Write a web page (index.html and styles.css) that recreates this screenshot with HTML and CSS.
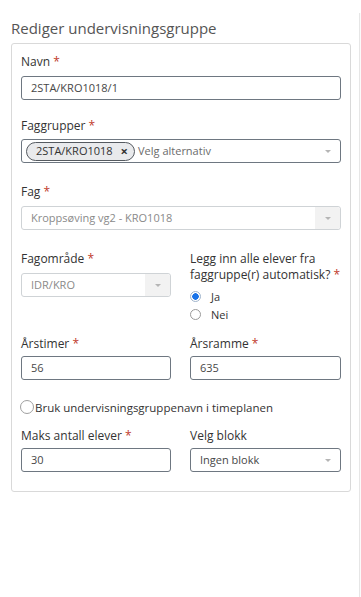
FILE: index.html
```html
<!DOCTYPE html>
<html lang="no">
<head>
  <meta charset="UTF-8">
  <meta name="viewport" content="width=device-width, initial-scale=1.0">
  <title>Rediger undervisningsgruppe</title>
  <link rel="stylesheet" href="styles.css">
</head>
<body>
  <div class="page">
    <main class="main">
      <h1 class="title">Rediger undervisningsgruppe</h1>

      <form class="card">
        <div class="field f-navn">
          <label class="label">Navn <span class="req">*</span></label>
          <div class="input">2STA/KRO1018/1</div>
        </div>

        <div class="field f-grupper">
          <label class="label">Faggrupper <span class="req">*</span></label>
          <div class="input select">
            <span class="chip">2STA/KRO1018 <span class="chip-x">&times;</span></span>
            <span class="placeholder">Velg alternativ</span>
            <span class="caret"></span>
          </div>
        </div>

        <div class="field f-fag">
          <label class="label">Fag <span class="req">*</span></label>
          <div class="input select disabled">
            <span class="value">Kroppsøving vg2 - KRO1018</span>
            <span class="caret-box"><span class="caret"></span></span>
          </div>
        </div>

        <div class="row row-omrade">
          <div class="field">
            <label class="label">Fagområde <span class="req">*</span></label>
            <div class="input select disabled">
              <span class="value">IDR/KRO</span>
              <span class="caret-box"><span class="caret"></span></span>
            </div>
          </div>
          <div class="field">
            <label class="label">Legg inn alle elever fra faggruppe(r) automatisk? <span class="req">*</span></label>
            <div class="radios">
              <div class="radio checked"><span class="dot"></span>Ja</div>
              <div class="radio"><span class="dot"></span>Nei</div>
            </div>
          </div>
        </div>

        <div class="row row-tight">
          <div class="field">
            <label class="label">Årstimer <span class="req">*</span></label>
            <div class="input">56</div>
          </div>
          <div class="field">
            <label class="label">Årsramme <span class="req">*</span></label>
            <div class="input">635</div>
          </div>
        </div>

        <div class="check">
          <span class="box"></span>Bruk undervisningsgruppenavn i timeplanen
        </div>

        <div class="row row-tight">
          <div class="field">
            <label class="label">Maks antall elever <span class="req">*</span></label>
            <div class="input">30</div>
          </div>
          <div class="field">
            <label class="label">Velg blokk</label>
            <div class="input select">
              <span class="value">Ingen blokk</span>
              <span class="caret"></span>
            </div>
          </div>
        </div>
      </form>
    </main>
    <aside class="side"></aside>
  </div>
</body>
</html>
```

FILE: styles.css
```css
:root {
  --text: #333333;
  --muted: #8a8a8a;
  --border: #6e7781;
  --border-light: #cfd3d6;
  --card-border: #d9d9d9;
  --req: #c0392b;
  --blue: #1a73e8;
}

* {
  margin: 0;
  padding: 0;
  box-sizing: border-box;
}

body {
  font-family: 'Open Sans', 'Liberation Sans', sans-serif;
  color: var(--text);
  background: #ffffff;
}

.page {
  display: flex;
  min-height: 597px;
}

.main {
  width: 359px;
  padding: 17px 8px 0 11px;
}

.side {
  flex: 1;
  margin-top: 13px;
  border-left: 1px solid #e6e6e6;
  background: #fafafa;
}

.title {
  font-size: 15px;
  font-weight: 400;
  color: #555555;
  line-height: 22px;
  margin-bottom: 4px;
}

.card {
  border: 1px solid var(--card-border);
  border-radius: 3px;
  padding: 10px 9px 19px 9px;
}

.label {
  display: block;
  font-size: 12px;
  font-weight: 500;
  line-height: 16px;
  margin-bottom: 6px;
}

.req {
  color: var(--req);
}

/* spacing between the stacked fields */
.f-navn {
  margin-bottom: 18px;
}

.f-grupper {
  margin-bottom: 21px;
}

.f-grupper .label {
  margin-bottom: 5px;
}

.f-fag {
  margin-bottom: 21px;
}

.input {
  height: 24px;
  border: 1px solid var(--border);
  border-radius: 3px;
  padding: 0 9px;
  font-size: 11px;
  line-height: 22px;
  color: #474747;
  display: flex;
  align-items: center;
}

.select {
  position: relative;
  padding-right: 24px;
}

.select.disabled {
  border-color: var(--border-light);
  color: var(--muted);
  padding-right: 0;
}

.select .value {
  flex: 1;
}

.caret {
  position: absolute;
  right: 9px;
  top: 10px;
  width: 0;
  height: 0;
  border-left: 3px solid transparent;
  border-right: 3px solid transparent;
  border-top: 3px solid #b5b5b5;
}

.caret-box {
  position: relative;
  width: 25px;
  align-self: stretch;
  background: #f2f2f2;
  border-radius: 0 3px 3px 0;
}

.chip {
  display: inline-flex;
  align-items: center;
  height: 19px;
  margin-left: -5px;
  padding: 0 6px 0 9px;
  border: 1px solid #555a60;
  border-radius: 10px;
  background: #e9eaec;
  color: #333;
  font-size: 11px;
}

.chip-x {
  font-weight: 700;
  font-size: 13px;
  line-height: 1;
  margin-left: 8px;
}

.placeholder {
  margin-left: 3px;
  color: #6b6b6b;
}

.row {
  display: grid;
  grid-template-columns: 150px 151px;
  column-gap: 19px;
}

.row-omrade {
  margin-bottom: 13px;
}

.row-tight .label {
  margin-bottom: 4px;
}

.radios {
  margin-top: -2px;
}

.radio {
  display: flex;
  align-items: center;
  height: 18px;
  font-size: 11px;
}

.radio .dot {
  width: 11px;
  height: 11px;
  border: 1px solid #9a9a9a;
  border-radius: 50%;
  margin-right: 10px;
  background: #fff;
}

.radio.checked .dot {
  border-color: #9fb4cc;
  background: radial-gradient(circle, var(--blue) 0, var(--blue) 3px, #fff 3.5px);
}

.check {
  display: flex;
  align-items: center;
  height: 16px;
  font-size: 11.5px;
  margin: 19px 0 13px -1px;
}

.check .box {
  width: 14px;
  height: 14px;
  border: 1px solid #a0a0a0;
  border-radius: 7px;
  margin-right: 1px;
}
```
